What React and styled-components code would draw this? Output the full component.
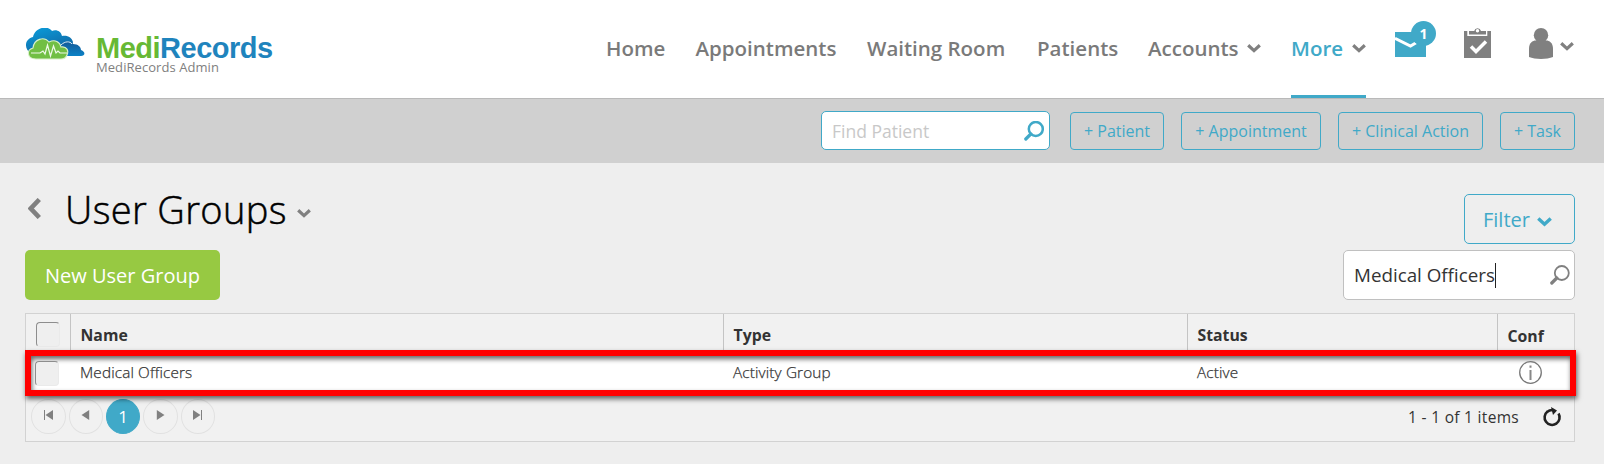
import React from 'react';
import styled, { createGlobalStyle } from 'styled-components';

const blue = '#40a9c8';
const grey = '#808080';

const GlobalStyle = createGlobalStyle`
  * { box-sizing: border-box; }
  body {
    margin: 0;
    background: #eee;
    font-family: "Open Sans", "Noto Sans", sans-serif;
    color: #333;
  }
  button, input { font-family: inherit; margin: 0; }
  svg { display: block; flex: none; }
`;

const Page = styled.div`
  height: 464px;
  overflow: hidden;
`;

const Header = styled.header`
  display: flex;
  height: 99px;
  padding: 0 30px 0 25px;
  background: #fff;
  border-bottom: 1px solid #b9b9b9;
`;

const Brand = styled.div`
  display: flex;
  padding-top: 28px;
  gap: 11px;
`;

const BrandText = styled.div`
  display: flex;
  flex-direction: column;
`;

const Wordmark = styled.div`
  height: 26px;
  margin-top: 7px;
  font: 700 29px/26px "Liberation Sans", Arial, sans-serif;
  letter-spacing: -0.5px;
  color: #1f84bd;
  white-space: nowrap;
  span { color: #67b934; }
`;

const Account = styled.div`
  font-size: 13px;
  line-height: 12px;
  letter-spacing: 0.06px;
  color: #808080;
  white-space: nowrap;
`;

const Nav = styled.nav`
  display: flex;
  margin-left: auto;
  gap: 30px;
`;

const NavItem = styled.a`
  display: flex;
  width: ${(p) => p.$width}px;
  height: 98px;
  border-bottom: 3px solid ${(p) => (p.$active ? blue : 'transparent')};
  color: ${(p) => (p.$active ? blue : '#7a7a7a')};
  font-size: 20.5px;
  font-weight: 600;
  line-height: 97px;
  white-space: nowrap;
  justify-content: space-between;
  align-items: flex-start;
  svg { margin-top: 44px; }
`;

const Tools = styled.div`
  display: flex;
  align-items: flex-start;
  padding-left: 29px;
`;

const Mail = styled.div`
  position: relative;
  width: 31px;
  margin: 32px 38px 0 0;
`;

const Badge = styled.span`
  position: absolute;
  left: 16px;
  top: -11px;
  width: 25px;
  height: 25px;
  border-radius: 50%;
  background: ${blue};
  color: #fff;
  font-size: 14px;
  font-weight: 700;
  line-height: 25px;
  text-align: center;
`;

const Tasks = styled.div`
  margin: 27px 38px 0 0;
`;

const UserMenu = styled.div`
  display: flex;
  gap: 7px;
  margin-top: 28px;
  svg:last-child { margin-top: 14px; }
`;

const ActionBar = styled.div`
  display: flex;
  justify-content: flex-end;
  gap: 17px;
  height: 64px;
  padding: 12px 29px 0 0;
  background: #d0d0d0;
`;

const PatientSearch = styled.div`
  display: flex;
  width: 229px;
  height: 39px;
  margin-right: 3px;
  padding: 0 5px 0 10px;
  align-items: center;
  justify-content: space-between;
  background: #fff;
  border: 1px solid ${blue};
  border-radius: 5px;
  color: #c8c8c8;
  font-size: 17.5px;
`;

const ActionButton = styled.button`
  width: ${(p) => p.$width}px;
  height: 38px;
  margin-top: 1px;
  padding: 0;
  background: transparent;
  border: 1px solid ${blue};
  border-radius: 4px;
  color: ${blue};
  font-size: 16px;
  white-space: nowrap;
`;

const Content = styled.main`
  padding: 31px 29px 0 25px;
`;

const Row = styled.div`
  display: flex;
  justify-content: space-between;
  margin-bottom: 6px;
`;

const TitleGroup = styled.div`
  display: flex;
  svg:first-child { margin: 4px 24px 0 3px; }
  svg:last-child { margin: 15px 0 0 13px; }
`;

const Title = styled.h1`
  width: 219px;
  margin: -12px 0 0;
  color: #000;
  font-size: 38px;
  font-weight: 300;
  letter-spacing: 0.35px;
  -webkit-text-stroke: 0.5px #000;
  line-height: 54px;
  white-space: nowrap;
`;

const FilterButton = styled.button`
  display: flex;
  width: 111px;
  height: 50px;
  padding: 0 22px 0 18px;
  align-items: center;
  justify-content: space-between;
  background: transparent;
  border: 1px solid ${blue};
  border-radius: 5px;
  color: ${blue};
  font-size: 20px;
  svg { margin-top: 5px; }
`;

const NewButton = styled.button`
  width: 195px;
  height: 50px;
  padding: 0;
  background: #97c942;
  border: 0;
  border-radius: 5px;
  color: #fff;
  font-size: 20px;
  white-space: nowrap;
`;

const GroupSearch = styled.div`
  display: flex;
  width: 232px;
  height: 50px;
  padding: 0 4px 0 10px;
  align-items: center;
  background: #fff;
  border: 1px solid #c0c0c0;
  border-radius: 5px;
  font-size: 18.8px;
  white-space: nowrap;
  svg { margin: -1px 0 0 auto; }
`;

const Caret = styled.span`
  width: 1px;
  height: 25px;
  background: #222;
`;

const Table = styled.section`
  margin-top: 13px;
  height: 129px;
  border: 1px solid #d2d2d2;
  background: #f1f1f1;
`;

const columns = '44px 653px 464px 310px 1fr';

const HeadRow = styled.div`
  display: grid;
  grid-template-columns: ${columns};
  height: 36px;
`;

const HeadCell = styled.div`
  padding: ${(p) => (p.$low ? 4 : 3)}px 0 0 9.5px;
  border-left: 1px solid #c4c4c4;
  font-size: 15.8px;
  font-weight: 700;
  line-height: 36px;
`;

const CheckCell = styled.div`
  padding: ${(p) => p.$pad};
`;

const Checkbox = styled.div`
  width: 24px;
  height: 25px;
  border: 1px solid #eaeaea;
  border-top-color: #8d8d8d;
  border-left-color: #8d8d8d;
  border-radius: 4px;
  background: #efefef;
`;

const DataRow = styled.div`
  position: relative;
  display: grid;
  grid-template-columns: 38px 653px 464px 310px 1fr;
  width: 1551px;
  height: 46px;
  margin-left: -1px;
  border: 6px solid #f00;
  background: #fff;
  box-shadow: 1px 3px 5px rgba(0, 0, 0, 0.6), inset 1px 3px 5px rgba(0, 0, 0, 0.6);
`;

const Cell = styled.div`
  padding-left: 11px;
  font-size: 15.3px;
  font-weight: 300;
  letter-spacing: 0.14px;
  -webkit-text-stroke: 0.25px #333;
  line-height: 33px;
`;

const InfoCell = styled.div`
  padding: 5px 0 0 23px;
`;

const Pager = styled.div`
  display: flex;
  align-items: flex-start;
  gap: 3px;
  padding: 3px 12px 0 5px;
`;

const PageButton = styled.button`
  display: flex;
  width: ${(p) => (p.$active ? 34 : 34.5)}px;
  height: 35px;
  padding: 0 0 ${(p) => (p.$active ? 0 : 3)}px;
  align-items: center;
  justify-content: center;
  border: 1px solid ${(p) => (p.$active ? blue : '#e1e1e1')};
  border-radius: 50%;
  background: ${(p) => (p.$active ? blue : 'transparent')};
  color: #fff;
  font-size: 17px;
`;

const PageInfo = styled.span`
  margin: 7px 20px 0 auto;
  font-size: 15.5px;
  letter-spacing: 0.3px;
  line-height: 22px;
`;

const Refresh = styled.span`
  margin-top: 8px;
`;

const Chevron = ({ color = grey, width = 14, height = 9 }) => (
  <svg width={width} height={height} viewBox="0 0 14 9">
    <path d="M1.2 1.3 7 6.6 12.8 1.3" fill="none" stroke={color} strokeWidth="3.2" />
  </svg>
);

const Magnifier = ({ color, heavy }) => (
  <svg width="20" height="20" viewBox="0 0 20 20">
    <circle cx="11.8" cy="8" r="7" fill="none" stroke={color} strokeWidth={heavy ? 2.5 : 1.8} />
    <path d="M6.8 13 1.8 18" stroke={color} strokeWidth="3.2" strokeLinecap="round" />
  </svg>
);

const CloudLogo = () => (
  <svg width="60" height="32" viewBox="0 0 60 32">
    <defs>
      <linearGradient id="back" x1="0" y1="0" x2="0.5" y2="1">
        <stop offset="0" stopColor="#0a9fdd" />
        <stop offset="1" stopColor="#1263a0" />
      </linearGradient>
      <linearGradient id="side" x1="0" y1="0" x2="0" y2="1">
        <stop offset="0" stopColor="#145998" />
        <stop offset="1" stopColor="#0b82c6" />
      </linearGradient>
    </defs>
    <path d="M6 25C-1 22-1 11 8 9 10-1 23-3 27 3c4-2 9 0 10 5 6-1 10 2 11 6l-3 14H8Z" fill="url(#back)" />
    <path d="M36 28V18c2-5 9-6 12-2 5 0 8 3 8 6 5 2 4 6 0 6Z" fill="url(#side)" />
    <path d="M36 17c4-4 9-4 11-1" fill="none" stroke="#dceef8" strokeWidth="1" />
    <path d="M11 31C2 31 1 22 8 20c1-9 11-12 16-6 6-3 11 0 12 5 6-1 8 4 6 8-1 3-3 4-6 4Z" fill="#71bf44" stroke="#d9f0c9" strokeWidth="1.1" />
    <path d="M6 25h9l3-2 2 3 2.500-9 3 11 3-10 2.500 7 2-2 2 2h7" fill="none" stroke="#eff9e8" strokeWidth="1.2" />
  </svg>
);

const MailIcon = () => (
  <svg width="31" height="25" viewBox="0 0 31 25">
    <path d="M0 0h31v25H0Z" fill={blue} />
    <path d="M0 6.3 15.5 14l5.6-3.2" fill="none" stroke="#fff" strokeWidth="3" />
  </svg>
);

const ClipboardIcon = () => (
  <svg width="27" height="31" viewBox="0 0 27 31">
    <path d="M0 4h3.3v5h20V4H27v27H0Z" fill={grey} />
    <path d="M5 4h5.2a3.5 3.5 0 0 1 6.8 0H22v3.5H5Z" fill={grey} />
    <circle cx="13.5" cy="3.8" r="1.7" fill="#fff" />
    <path d="m7 19.5 5 5L22 14.5" fill="none" stroke="#fff" strokeWidth="3.5" />
  </svg>
);

const UserIcon = () => (
  <svg width="24" height="31" viewBox="0 0 24 31">
    <circle cx="12" cy="7.2" r="7.2" fill={grey} />
    <path d="M0 29V20.500C0 15 3.500 12.400 7 12.400h10c3.500 0 7 2.600 7 8.100V29c-6 2.500-18 2.500-24 0Z" fill={grey} />
  </svg>
);

const Arrow = ({ back, bar }) => (
  <svg width="9" height="10" viewBox="0 0 9 10">
    <g transform={back ? 'translate(9 0) scale(-1 1)' : undefined}>
      <path d={bar ? 'M0 0 7.500 5 0 10Z' : 'M.8 0 8.500 5 .8 10Z'} fill="#808080" />
      {bar && <path d="M8.500 0v10" stroke="#808080" />}
    </g>
  </svg>
);

const navItems = [
  { label: 'Home', width: 59.5 },
  { label: 'Appointments', width: 141.5 },
  { label: 'Waiting Room', width: 140 },
  { label: 'Patients', width: 81 },
  { label: 'Accounts', width: 113, menu: true },
  { label: 'More', width: 75, menu: true, active: true },
];

const actions = [
  ['+ Patient', 94],
  ['+ Appointment', 140],
  ['+ Clinical Action', 145],
  ['+ Task', 75],
];

export default function App() {
  return (
    <Page>
      <GlobalStyle />
      <Header>
        <Brand>
          <CloudLogo />
          <BrandText>
            <Wordmark><span>Medi</span>Records</Wordmark>
            <Account>MediRecords Admin</Account>
          </BrandText>
        </Brand>
        <Nav>
          {navItems.map((item) => (
            <NavItem key={item.label} $width={item.width} $active={item.active}>
              {item.label}
              {item.menu && <Chevron />}
            </NavItem>
          ))}
        </Nav>
        <Tools>
          <Mail><MailIcon /><Badge>1</Badge></Mail>
          <Tasks><ClipboardIcon /></Tasks>
          <UserMenu><UserIcon /><Chevron /></UserMenu>
        </Tools>
      </Header>
      <ActionBar>
        <PatientSearch>Find Patient<Magnifier color={blue} heavy /></PatientSearch>
        {actions.map(([label, width]) => (
          <ActionButton key={label} $width={width}>{label}</ActionButton>
        ))}
      </ActionBar>
      <Content>
        <Row>
          <TitleGroup>
            <svg width="13" height="21" viewBox="0 0 13 21">
              <path d="M11.300 1.500 2.800 10.500 11.300 19.500" fill="none" stroke={grey} strokeWidth="4.600" />
            </svg>
            <Title>User Groups</Title>
            <Chevron />
          </TitleGroup>
          <FilterButton>Filter<Chevron color={blue} width={15} height={10} /></FilterButton>
        </Row>
        <Row>
          <NewButton>New User Group</NewButton>
          <GroupSearch>Medical Officers<Caret /><Magnifier color={grey} /></GroupSearch>
        </Row>
        <Table>
          <HeadRow>
            <CheckCell $pad="8px 0 0 10px"><Checkbox /></CheckCell>
            <HeadCell>Name</HeadCell>
            <HeadCell>Type</HeadCell>
            <HeadCell>Status</HeadCell>
            <HeadCell $low>Conf</HeadCell>
          </HeadRow>
          <DataRow>
            <CheckCell $pad="5px 0 0 4px"><Checkbox /></CheckCell>
            <Cell>Medical Officers</Cell>
            <Cell>Activity Group</Cell>
            <Cell>Active</Cell>
            <InfoCell>
              <svg width="23" height="23" viewBox="0 0 23 23">
                <circle cx="11.500" cy="11.500" r="10.800" fill="none" stroke="#777" strokeWidth="1.300" />
                <path d="M11.500 9v10M11.500 4.500v2.300" stroke="#888" strokeWidth="2" />
              </svg>
            </InfoCell>
          </DataRow>
          <Pager>
            <PageButton><Arrow back bar /></PageButton>
            <PageButton><Arrow back /></PageButton>
            <PageButton $active>1</PageButton>
            <PageButton><Arrow /></PageButton>
            <PageButton><Arrow bar /></PageButton>
            <PageInfo>1 - 1 of 1 items</PageInfo>
            <Refresh>
              <svg width="20" height="20" viewBox="0 0 20 20">
                <path d="M5.500 4.500A7.500 7.500 0 1 0 16.500 6.500" fill="none" stroke="#222" strokeWidth="2.600" />
                <path d="M9 0 15 3.500 11 8Z" fill="#222" />
                <path d="M5 5Q8 2.500 12 3.200" fill="none" stroke="#222" strokeWidth="2.400" />
              </svg>
            </Refresh>
          </Pager>
        </Table>
      </Content>
    </Page>
  );
}
